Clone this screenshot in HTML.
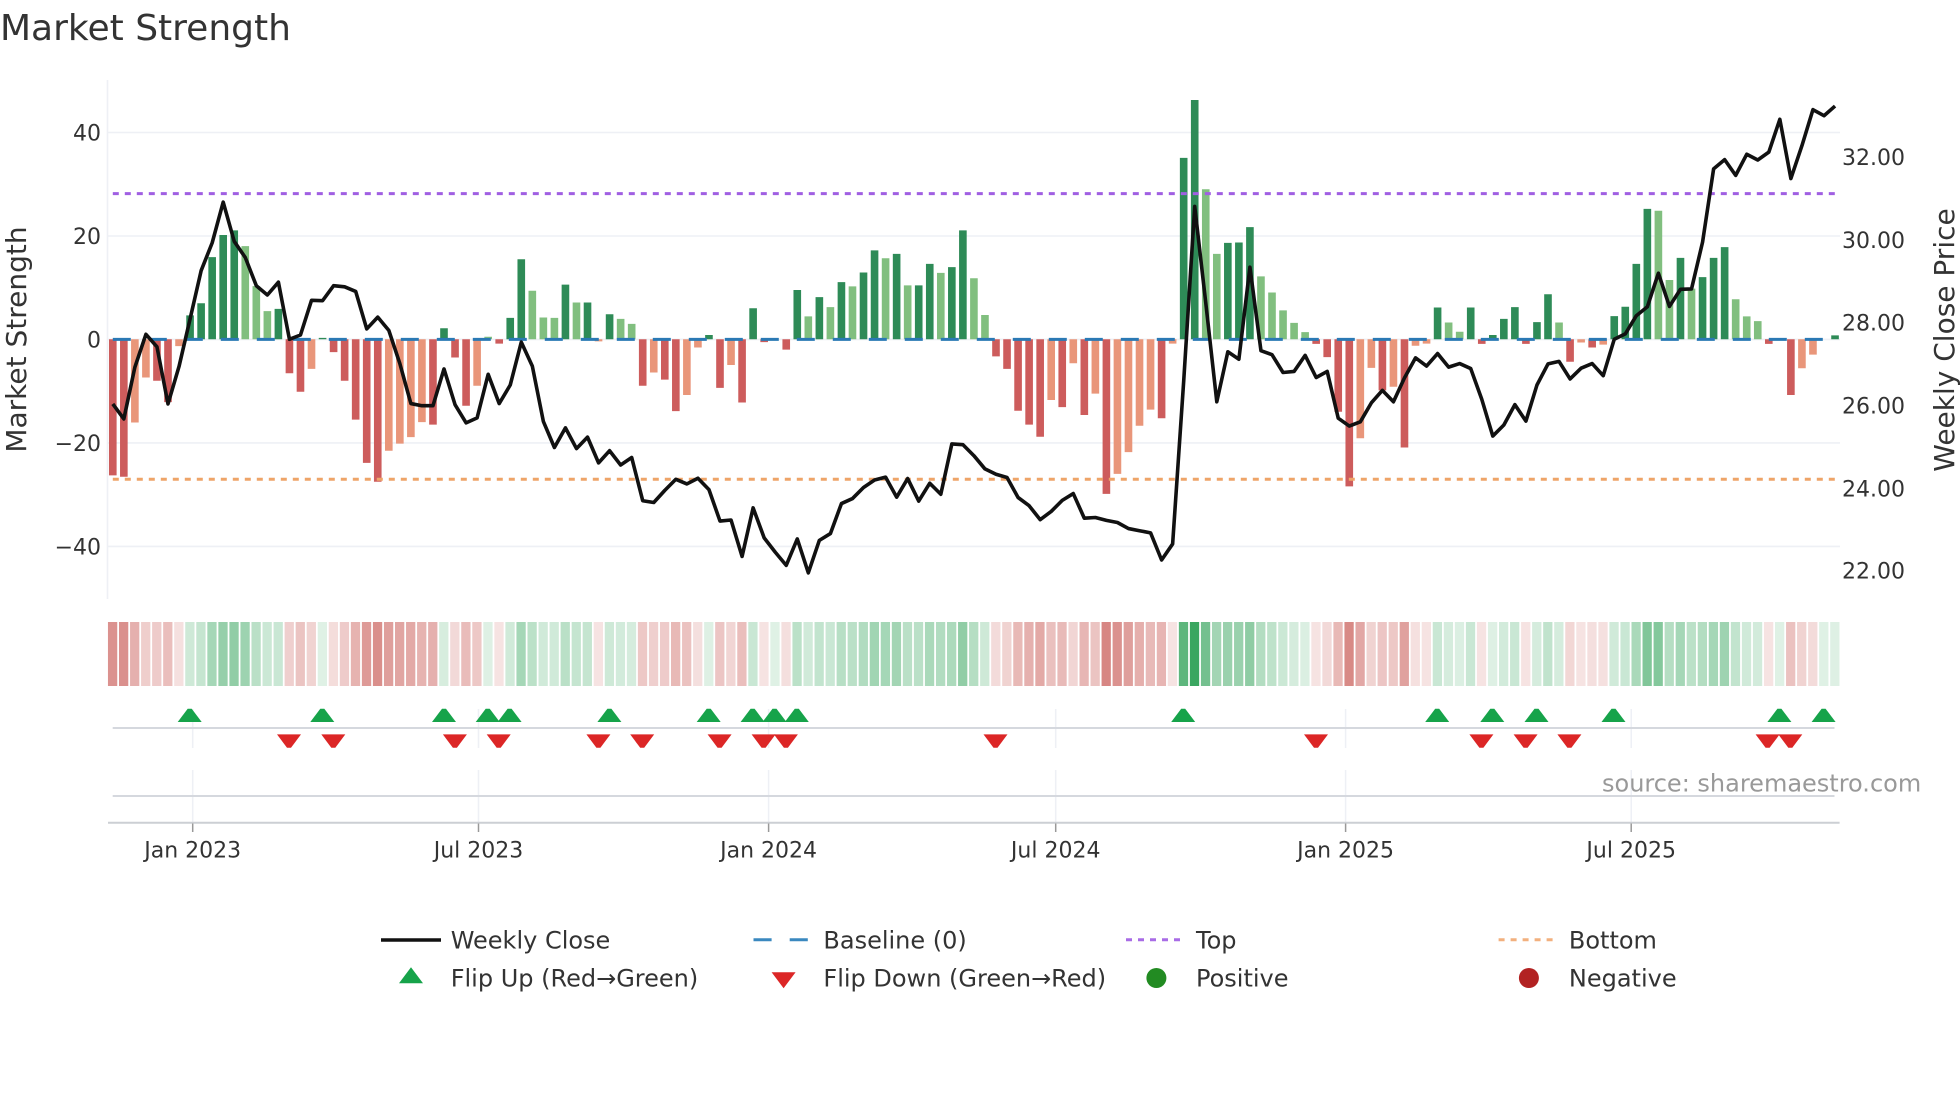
<!DOCTYPE html>
<html>
<head>
<meta charset="utf-8">
<style>
html,body{margin:0;padding:0;background:#fff;width:1960px;height:1102px;overflow:hidden}
svg{display:block}
text{font-family:"DejaVu Sans","Liberation Sans",sans-serif;fill:#333}
.t{font-size:22px}
.l{font-size:24px}
.e{text-anchor:end}
.m{text-anchor:middle}
</style>
</head>
<body>
<svg width="1960" height="1102" viewBox="0 0 1960 1102" xmlns="http://www.w3.org/2000/svg">
<rect width="1960" height="1102" fill="#fff"/>
<text x="0" y="40" style="font-size:36px">Market Strength</text>

<!-- grid -->
<g stroke="#eef0f5" stroke-width="1.6" fill="none">
<path d="M107.5 80V599"/>
<path d="M108 132.5H1840M108 236H1840M108 339.4H1840M108 442.9H1840M108 546.4H1840"/>
</g>

<!-- bars -->
<g transform="translate(112.8,60) scale(11.04,0.357143)" fill="none" stroke-width=".69">
<path stroke="#cd5c5c" d="M0 782V1163M1 782V1167M4 782V898M5 782V958M16 782V877M17 782V929M20 782V818M21 782V898M22 782V1007M23 782V1128M24 782V1181M29 782V1021M31 782V833M32 782V968M35 782V794M48 782V912M50 782V895M51 782V983M55 782V918M57 782V959M59 782V790M61 782V811M80 782V830M81 782V865M82 782V982M83 782V1021M84 782V1055M86 782V972M88 782V994M90 782V1215M95 782V1003M109 782V795M110 782V832M111 782V985M112 782V1194M115 782V925M117 782V1085M124 782V795M128 782V795M132 782V845M134 782V805M150 782V795M152 782V938"/>
<path stroke="#e9967a" d="M2 782V1015M3 782V889M6 782V801M18 782V865M25 782V1094M26 782V1074M27 782V1056M28 782V1014M33 782V912M44 782V788M49 782V875M52 782V938M53 782V805M56 782V854M85 782V952M87 782V849M89 782V934M91 782V1159M92 782V1098M93 782V1024M94 782V979M96 782V794M113 782V1059M114 782V862M116 782V915M118 782V800M119 782V794M133 782V791M135 782V797M153 782V863M154 782V825"/>
<path stroke="#2e8b57" d="M7 782V715M8 782V681M9 782V552M10 782V490M11 782V477M15 782V697M19 782V778M30 782V751M36 782V722M37 782V558M41 782V629M43 782V679M45 782V712M54 782V770M58 782V695M62 782V644M64 782V664M66 782V622M68 782V595M69 782V533M71 782V543M73 782V631M74 782V571M76 782V580M77 782V477M97 782V274M98 782V112M101 782V512M102 782V511M103 782V468M120 782V693M123 782V693M125 782V770M126 782V725M127 782V692M129 782V734M130 782V656M136 782V717M137 782V691M138 782V571M139 782V417M142 782V554M144 782V608M145 782V554M146 782V524M156 782V771"/>
<path stroke="#81bf7f" d="M12 782V521M13 782V633M14 782V703M34 782V775M38 782V646M39 782V721M40 782V722M42 782V679M46 782V725M47 782V739M63 782V718M65 782V692M67 782V634M70 782V555M72 782V631M75 782V596M78 782V611M79 782V714M99 782V362M100 782V543M104 782V606M105 782V651M106 782V701M107 782V736M108 782V762M121 782V735M122 782V761M131 782V735M140 782V422M141 782V616M143 782V640M147 782V670M148 782V718M149 782V731"/>
</g>

<!-- reference lines -->
<path d="M112.8 193.6H1835" stroke="#a05fe2" stroke-width="3" stroke-dasharray="6 6" fill="none"/>
<path d="M112.8 479.3H1835" stroke="#eea468" stroke-width="3" stroke-dasharray="6 6" fill="none"/>
<path d="M112.8 339.4H1835" stroke="#2a79b4" stroke-width="3" stroke-dasharray="18 18" fill="none"/>

<!-- price line -->
<g transform="translate(112.8,60) scale(11.04,0.357143)">
<polyline fill="none" stroke="#111" stroke-width="3.6" stroke-linejoin="round" vector-effect="non-scaling-stroke" points="0,963 1,1005 2,860 3,768 4,803 5,963 6,858 7,725 8,590 9,512 10,398 11,508 12,553 13,632 14,658 15,622 16,782 17,770 18,673 19,674 20,632 21,635 22,648 23,753 24,720 25,757 26,850 27,962 28,968 29,968 30,865 31,965 32,1016 33,1002 34,880 35,962 36,910 37,790 38,857 39,1012 40,1085 41,1030 42,1088 43,1056 44,1128 45,1094 46,1134 47,1113 48,1234 49,1239 50,1205 51,1174 52,1187 53,1171 54,1203 55,1291 56,1288 57,1390 58,1254 59,1338 60,1378 61,1415 62,1341 63,1436 64,1345 65,1326 66,1242 67,1228 68,1197 69,1176 70,1168 71,1224 72,1172 73,1235 74,1185 75,1216 76,1075 77,1077 78,1108 79,1145 80,1160 81,1169 82,1225 83,1248 84,1287 85,1264 86,1233 87,1214 88,1283 89,1281 90,1289 91,1295 92,1312 93,1318 94,1324 95,1400 96,1355 97,900 98,410 99,680 100,957 101,817 102,838 103,580 104,814 105,825 106,875 107,872 108,827 109,889 110,872 111,1003 112,1025 113,1013 114,960 115,925 116,957 117,890 118,834 119,857 120,822 121,860 122,850 123,864 124,950 125,1053 126,1022 127,965 128,1011 129,910 130,851 131,844 132,893 133,863 134,850 135,884 136,782 137,767 138,716 139,691 140,597 141,690 142,642 143,641 144,510 145,305 146,279 147,323 148,264 149,280 150,258 151,166 152,332 153,240 154,139 155,156 156,129"/>
</g>

<!-- y ticks -->
<g class="t">
<text class="t e" x="101" y="140.5">40</text>
<text class="t e" x="101" y="244">20</text>
<text class="t e" x="101" y="347.4">0</text>
<text class="t e" x="101" y="451">−20</text>
<text class="t e" x="101" y="554.4">−40</text>
<text class="t" x="1842" y="165">32.00</text>
<text class="t" x="1842" y="248">30.00</text>
<text class="t" x="1842" y="330.5">28.00</text>
<text class="t" x="1842" y="413.5">26.00</text>
<text class="t" x="1842" y="496.5">24.00</text>
<text class="t" x="1842" y="578.7">22.00</text>
</g>
<text transform="translate(26,339.5) rotate(-90)" text-anchor="middle" style="font-size:28px">Market Strength</text>
<text transform="translate(1954,340) rotate(-90)" text-anchor="middle" style="font-size:28px">Weekly Close Price</text>

<!-- strength band -->
<g transform="translate(112.6,622) scale(11.04,1)" fill="none" stroke-width=".84">
<g stroke="#c0403a">
<path d="M0 0V64" opacity=".57"/><path d="M1 0V64" opacity=".58"/><path d="M2 0V64" opacity=".41"/><path d="M3 0V64" opacity=".26"/><path d="M4 0V64" opacity=".27"/><path d="M5 0V64" opacity=".34"/><path d="M6 0V64" opacity=".16"/><path d="M16 0V64" opacity=".25"/><path d="M17 0V64" opacity=".31"/><path d="M18 0V64" opacity=".23"/><path d="M20 0V64" opacity=".18"/><path d="M21 0V64" opacity=".27"/><path d="M22 0V64" opacity=".40"/><path d="M23 0V64" opacity=".53"/><path d="M24 0V64" opacity=".59"/><path d="M25 0V64" opacity=".50"/><path d="M26 0V64" opacity=".47"/><path d="M27 0V64" opacity=".45"/><path d="M28 0V64" opacity=".40"/><path d="M29 0V64" opacity=".41"/><path d="M31 0V64" opacity=".20"/><path d="M32 0V64" opacity=".35"/><path d="M33 0V64" opacity=".29"/><path d="M35 0V64" opacity=".15"/><path d="M44 0V64" opacity=".15"/><path d="M48 0V64" opacity=".29"/><path d="M49 0V64" opacity=".25"/><path d="M50 0V64" opacity=".27"/><path d="M51 0V64" opacity=".37"/><path d="M52 0V64" opacity=".32"/><path d="M53 0V64" opacity=".17"/><path d="M55 0V64" opacity=".30"/><path d="M56 0V64" opacity=".22"/><path d="M57 0V64" opacity=".34"/><path d="M59 0V64" opacity=".15"/><path d="M61 0V64" opacity=".17"/><path d="M80 0V64" opacity=".19"/><path d="M81 0V64" opacity=".23"/><path d="M82 0V64" opacity=".37"/><path d="M83 0V64" opacity=".41"/><path d="M84 0V64" opacity=".45"/><path d="M85 0V64" opacity=".33"/><path d="M86 0V64" opacity=".36"/><path d="M87 0V64" opacity=".22"/><path d="M88 0V64" opacity=".38"/><path d="M89 0V64" opacity=".31"/><path d="M90 0V64" opacity=".63"/><path d="M91 0V64" opacity=".57"/><path d="M92 0V64" opacity=".50"/><path d="M93 0V64" opacity=".42"/><path d="M94 0V64" opacity=".36"/><path d="M95 0V64" opacity=".39"/><path d="M96 0V64" opacity=".15"/><path d="M109 0V64" opacity=".15"/><path d="M110 0V64" opacity=".20"/><path d="M111 0V64" opacity=".37"/><path d="M112 0V64" opacity=".61"/><path d="M113 0V64" opacity=".46"/><path d="M114 0V64" opacity=".23"/><path d="M115 0V64" opacity=".30"/><path d="M116 0V64" opacity=".29"/><path d="M117 0V64" opacity=".49"/><path d="M118 0V64" opacity=".16"/><path d="M119 0V64" opacity=".15"/><path d="M124 0V64" opacity=".15"/><path d="M128 0V64" opacity=".15"/><path d="M132 0V64" opacity=".21"/><path d="M133 0V64" opacity=".15"/><path d="M134 0V64" opacity=".17"/><path d="M135 0V64" opacity=".16"/><path d="M150 0V64" opacity=".15"/><path d="M152 0V64" opacity=".32"/><path d="M153 0V64" opacity=".23"/><path d="M154 0V64" opacity=".19"/>
</g>
<g stroke="#1f9a4a">
<path d="M7 0V64" opacity=".22"/><path d="M8 0V64" opacity=".26"/><path d="M9 0V64" opacity=".40"/><path d="M10 0V64" opacity=".47"/><path d="M11 0V64" opacity=".49"/><path d="M12 0V64" opacity=".44"/><path d="M13 0V64" opacity=".31"/><path d="M14 0V64" opacity=".23"/><path d="M15 0V64" opacity=".24"/><path d="M19 0V64" opacity=".14"/><path d="M30 0V64" opacity=".18"/><path d="M34 0V64" opacity=".15"/><path d="M36 0V64" opacity=".21"/><path d="M37 0V64" opacity=".40"/><path d="M38 0V64" opacity=".30"/><path d="M39 0V64" opacity=".21"/><path d="M40 0V64" opacity=".21"/><path d="M41 0V64" opacity=".31"/><path d="M42 0V64" opacity=".26"/><path d="M43 0V64" opacity=".26"/><path d="M45 0V64" opacity=".22"/><path d="M46 0V64" opacity=".20"/><path d="M47 0V64" opacity=".19"/><path d="M54 0V64" opacity=".15"/><path d="M58 0V64" opacity=".24"/><path d="M60 0V64" opacity=".14"/><path d="M62 0V64" opacity=".30"/><path d="M63 0V64" opacity=".21"/><path d="M64 0V64" opacity=".27"/><path d="M65 0V64" opacity=".24"/><path d="M66 0V64" opacity=".32"/><path d="M67 0V64" opacity=".31"/><path d="M68 0V64" opacity=".35"/><path d="M69 0V64" opacity=".42"/><path d="M70 0V64" opacity=".40"/><path d="M71 0V64" opacity=".41"/><path d="M72 0V64" opacity=".31"/><path d="M73 0V64" opacity=".31"/><path d="M74 0V64" opacity=".38"/><path d="M75 0V64" opacity=".35"/><path d="M76 0V64" opacity=".37"/><path d="M77 0V64" opacity=".49"/><path d="M78 0V64" opacity=".33"/><path d="M79 0V64" opacity=".22"/><path d="M97 0V64" opacity=".72"/><path d="M98 0V64" opacity=".88"/><path d="M99 0V64" opacity=".62"/><path d="M100 0V64" opacity=".41"/><path d="M101 0V64" opacity=".45"/><path d="M102 0V64" opacity=".45"/><path d="M103 0V64" opacity=".50"/><path d="M104 0V64" opacity=".34"/><path d="M105 0V64" opacity=".29"/><path d="M106 0V64" opacity=".23"/><path d="M107 0V64" opacity=".19"/><path d="M108 0V64" opacity=".16"/><path d="M120 0V64" opacity=".24"/><path d="M121 0V64" opacity=".19"/><path d="M122 0V64" opacity=".16"/><path d="M123 0V64" opacity=".24"/><path d="M125 0V64" opacity=".15"/><path d="M126 0V64" opacity=".20"/><path d="M127 0V64" opacity=".24"/><path d="M129 0V64" opacity=".19"/><path d="M130 0V64" opacity=".28"/><path d="M131 0V64" opacity=".19"/><path d="M136 0V64" opacity=".21"/><path d="M137 0V64" opacity=".24"/><path d="M138 0V64" opacity=".38"/><path d="M139 0V64" opacity=".56"/><path d="M140 0V64" opacity=".55"/><path d="M141 0V64" opacity=".33"/><path d="M142 0V64" opacity=".40"/><path d="M143 0V64" opacity=".30"/><path d="M144 0V64" opacity=".34"/><path d="M145 0V64" opacity=".40"/><path d="M146 0V64" opacity=".43"/><path d="M147 0V64" opacity=".27"/><path d="M148 0V64" opacity=".21"/><path d="M149 0V64" opacity=".20"/><path d="M151 0V64" opacity=".14"/><path d="M155 0V64" opacity=".14"/><path d="M156 0V64" opacity=".15"/>
</g>
</g>

<!-- lower panels -->
<g stroke="#eef0f5" stroke-width="1.5" fill="none">
<path d="M192.7 709V748M192.7 770V822M478.5 709V748M478.5 770V822M768.6 709V748M768.6 770V822M1055.7 709V748M1055.7 770V822M1345.6 709V748M1345.6 770V822M1631.2 709V748M1631.2 770V822"/>
</g>
<g stroke="#d5d8de" stroke-width="2" fill="none">
<path d="M112.7 728H1834.5M112.7 796H1834.5"/>
<path d="M108 822.7H1839.6" stroke="#cccfd4"/>
</g>
<path d="M192.7 823.5V832M478.5 823.5V832M768.6 823.5V832M1055.7 823.5V832M1345.6 823.5V832M1631.2 823.5V832" stroke="#999" stroke-width="1.5" fill="none"/>

<!-- flip markers -->
<defs></defs>
<g fill="#16a34a">
<path d="M187.7 708.7h4l10 13.3h-24z"/><path d="M320.3 708.7h4l10 13.3h-24z"/><path d="M442 708.7h4l10 13.3h-24z"/><path d="M485.7 708.7h4l10 13.3h-24z"/><path d="M507.6 708.7h4l10 13.3h-24z"/><path d="M607.4 708.7h4l10 13.3h-24z"/><path d="M706.7 708.7h4l10 13.3h-24z"/><path d="M750.6 708.7h4l10 13.3h-24z"/><path d="M772.5 708.7h4l10 13.3h-24z"/><path d="M794.8 708.7h4l10 13.3h-24z"/><path d="M1181.2 708.7h4l10 13.3h-24z"/><path d="M1435.2 708.7h4l10 13.3h-24z"/><path d="M1490.3 708.7h4l10 13.3h-24z"/><path d="M1534.5 708.7h4l10 13.3h-24z"/><path d="M1611.5 708.7h4l10 13.3h-24z"/><path d="M1777.4 708.7h4l10 13.3h-24z"/><path d="M1821.6 708.7h4l10 13.3h-24z"/>
</g>
<g fill="#dc2626">
<path d="M287 747.8h4l10-13.4h-24z"/><path d="M331.3 747.8h4l10-13.4h-24z"/><path d="M452.9 747.8h4l10-13.4h-24z"/><path d="M496.7 747.8h4l10-13.4h-24z"/><path d="M596.4 747.8h4l10-13.4h-24z"/><path d="M640.2 747.8h4l10-13.4h-24z"/><path d="M717.6 747.8h4l10-13.4h-24z"/><path d="M761.6 747.8h4l10-13.4h-24z"/><path d="M783.9 747.8h4l10-13.4h-24z"/><path d="M993.5 747.8h4l10-13.4h-24z"/><path d="M1314 747.8h4l10-13.4h-24z"/><path d="M1479.4 747.8h4l10-13.4h-24z"/><path d="M1523.6 747.8h4l10-13.4h-24z"/><path d="M1567.4 747.8h4l10-13.4h-24z"/><path d="M1765.6 747.8h4l10-13.4h-24z"/><path d="M1788.3 747.8h4l10-13.4h-24z"/>
</g>

<!-- x labels -->
<text class="t m" x="192.7" y="857.7">Jan 2023</text>
<text class="t m" x="478.5" y="857.7">Jul 2023</text>
<text class="t m" x="768.6" y="857.7">Jan 2024</text>
<text class="t m" x="1055.7" y="857.7">Jul 2024</text>
<text class="t m" x="1345.6" y="857.7">Jan 2025</text>
<text class="t m" x="1631.2" y="857.7">Jul 2025</text>

<text x="1602" y="791.7" style="font-size:24px;fill:#999">source: sharemaestro.com</text>

<!-- legend -->
<path d="M381 940H441" stroke="#111" stroke-width="3.6" fill="none"/>
<path d="M753.5 939.7H771.6M789.7 939.7H807.8" stroke="#3a88bf" stroke-width="3" fill="none"/>
<path d="M1126 939.7H1181" stroke="#a86ce6" stroke-width="3" stroke-dasharray="6 6" fill="none"/>
<path d="M1498.6 939.7H1553.7" stroke="#f2b07e" stroke-width="3" stroke-dasharray="6 6" fill="none"/>
<path d="M411 967.3l12 16h-24z" fill="#16a34a"/>
<path d="M783.6 988.3l-12-16h24z" fill="#dc2626"/>
<circle cx="1156.4" cy="978" r="10" fill="#228b22"/>
<circle cx="1528.9" cy="978" r="10" fill="#b22222"/>
<text class="l" x="450.7" y="948.7">Weekly Close</text>
<text class="l" x="823.4" y="948.7">Baseline (0)</text>
<text class="l" x="1196" y="948.7">Top</text>
<text class="l" x="1568.9" y="948.7">Bottom</text>
<text class="l" x="450.7" y="986.7">Flip Up (Red→Green)</text>
<text class="l" x="823.4" y="986.7">Flip Down (Green→Red)</text>
<text class="l" x="1196" y="986.7">Positive</text>
<text class="l" x="1568.9" y="986.7">Negative</text>
</svg>
</body>
</html>
